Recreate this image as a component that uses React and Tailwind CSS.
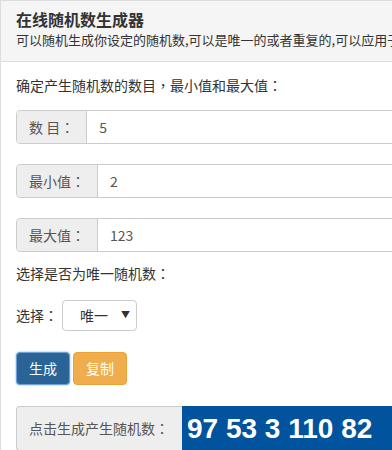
import React from "react";

const cjk = { fontFamily: '"Noto Sans CJK SC", "Liberation Sans", sans-serif' };
const tc = { fontFamily: '"Noto Sans CJK TC", sans-serif' };
const C = () => <span style={tc}>：</span>;

function Group({ label, value }) {
  return (
    <div className="flex h-[34px] border border-[#ccc] rounded-l-[4px] text-[14px]">
      <div className="flex items-center px-3 bg-[#eee] text-[#555] border-r border-[#ccc] rounded-l-[4px] whitespace-pre">
        {label}
        <C />
      </div>
      <div className="flex items-center px-3 text-[#555] flex-1 bg-white">{value}</div>
    </div>
  );
}

export default function App() {
  return (
    <div className="w-[392px] h-[450px] overflow-hidden bg-white text-[#333]" style={cjk}>
      <div className="w-[420px] border-l border-t border-[#ddd] h-[460px]">
        <div className="h-[61px] bg-[#f5f5f5] border-b border-[#ddd] pl-[15px] pt-[8px] overflow-hidden">
          <div className="text-[16px] font-bold leading-[20px] text-[#333]">在线随机数生成器</div>
          <div className="text-[13px] leading-[20px] mt-[1px] whitespace-nowrap text-[#333]">
            可以随机生成你设定的随机数,可以是唯一的或者重复的,可以应用于
          </div>
        </div>
        <div className="pl-[15px] pt-[13px]">
          <div className="text-[14px] leading-[20px]">
            确定产生随机数的数目<span style={tc}>，</span>最小值和最大值<C />
          </div>
          <div className="mt-[15px]">
            <Group label="数 目" value="5" />
          </div>
          <div className="mt-[20px]">
            <Group label="最小值" value="2" />
          </div>
          <div className="mt-[20px]">
            <Group label="最大值" value="123" />
          </div>
          <div className="text-[14px] leading-[20px] mt-[11px]">
            选择是否为唯一随机数<C />
          </div>
          <div className="flex items-center mt-[17px] text-[14px]">
            <span>
              选择<C />
            </span>
            <div className="ml-[4px] w-[75px] h-[31px] border border-[#ccc] rounded-[4px] flex items-center pl-[17px] pr-[6px] justify-between text-[#333]">
              <span>唯一</span>
              <span className="text-[9px] text-[#333] mb-[2px]">▼</span>
            </div>
          </div>
          <div className="flex gap-[3px] mt-[21px] text-[14px]">
            <div className="w-[54px] h-[33px] rounded-[4px] bg-[#2a6496] text-white flex items-center justify-center border border-[#6fa0d8] shadow-[0_0_2px_#66afe9]">
              生成
            </div>
            <div className="w-[54px] h-[33px] rounded-[4px] bg-[#f0ad4e] text-white flex items-center justify-center border border-[#eea236]">
              复制
            </div>
          </div>
          <div className="flex mt-[21px] h-[45px]">
            <div className="flex items-center px-3 bg-[#eee] text-[#555] border border-[#ccc] border-r-0 rounded-l-[4px] text-[14px] w-[166px]">
              点击生成产生随机数<C />
            </div>
            <div
              className="flex-1 bg-[#01539d] text-white font-bold flex items-center pl-[5px] text-[28px]"
              style={{ fontFamily: '"Liberation Sans", Arial, sans-serif' }}
            >
              97 53 3 110 82
            </div>
          </div>
        </div>
      </div>
    </div>
  );
}
